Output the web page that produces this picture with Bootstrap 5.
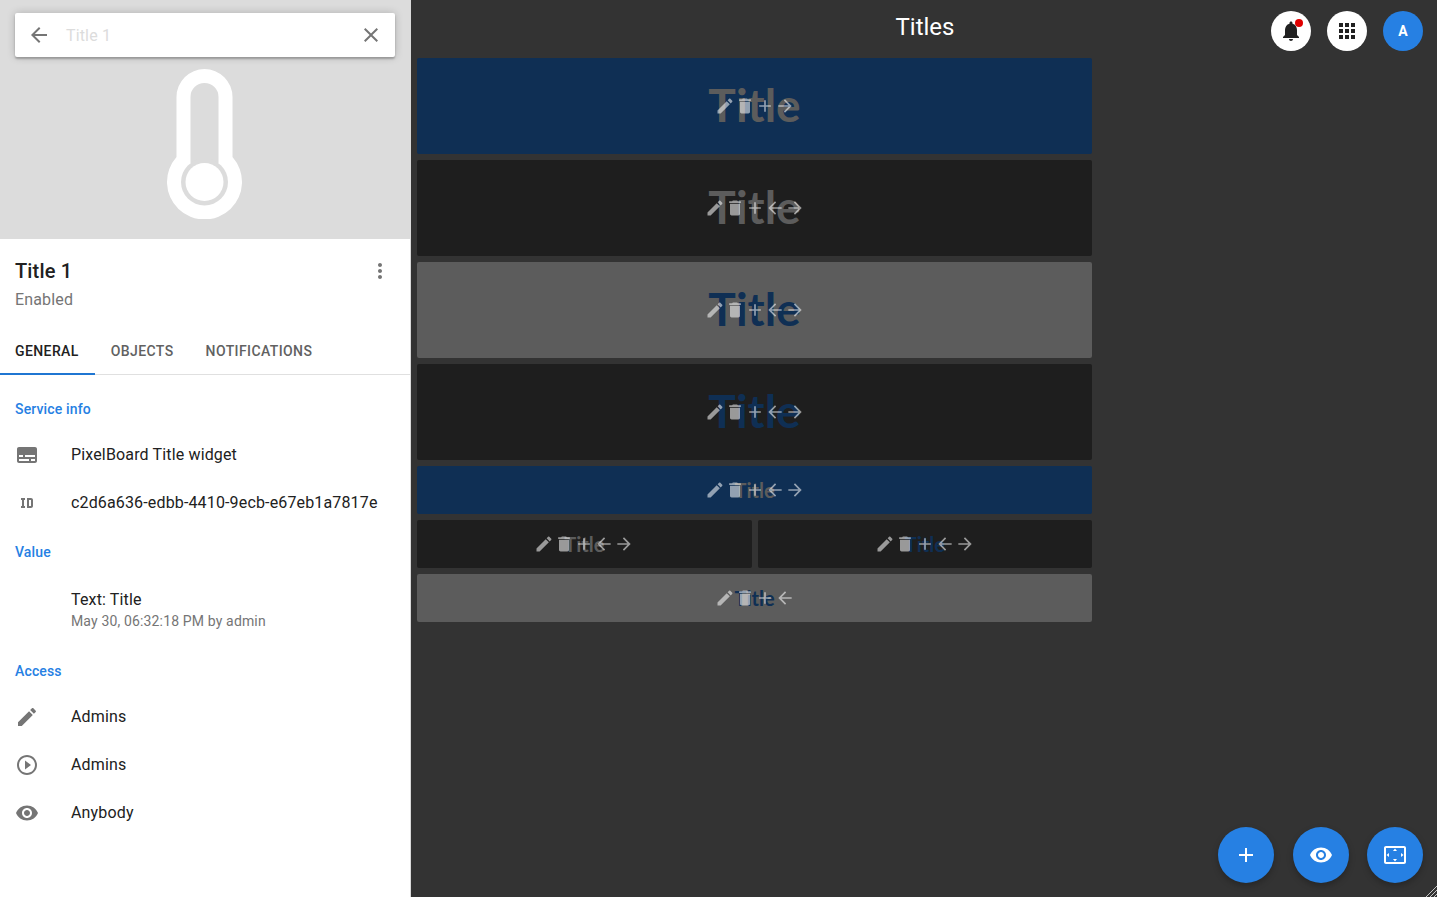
<!DOCTYPE html>
<html lang="en">
<head>
<meta charset="utf-8">
<title>Titles</title>
<link href="https://cdn.jsdelivr.net/npm/bootstrap@5.3.0/dist/css/bootstrap.min.css" rel="stylesheet">
<style>
html,body{height:100%;overflow:hidden}
body{font-family:Roboto,"Liberation Sans",sans-serif;background:#333;font-size:16px;color:#212121}
.shell{height:897px}
.side{width:411px;flex:0 0 411px;background:#fff;border-right:1px solid #d9d9d9;overflow:hidden;letter-spacing:.15px}
.hero{height:239px;background:#dcdcdc;padding:13px 15px 0}
.searchbar{height:44px;border-radius:2px;background:#fff;box-shadow:0 2px 2px rgba(0,0,0,.24),0 0 8px rgba(0,0,0,.2);padding:0 12px}
.searchbar .ph{margin-left:15px;color:#dcdcdc;font-size:16px;padding-top:2px}
.ico{fill:#757575;display:block;flex:none}
.thermo{display:block;margin:12px 0 0 152px}
.headline{padding:20px 18px 0 15px;height:89px}
.headline .nm{font-size:20px;line-height:24px;font-weight:500;color:#212121}
.headline .st{font-size:16px;line-height:24px;color:#757575;margin-top:5px}
.tabsrow{height:47px;border-bottom:1px solid #e0e0e0}
.tabitem{font-size:14px;font-weight:500;letter-spacing:.4px;color:#616161;padding:0 16px;line-height:46px;height:47px;text-transform:uppercase}
.tabitem:first-child{padding-left:15px;color:#212121;box-shadow:inset 0 -2px 0 #1f76d2}
.sect{font-size:14px;line-height:20px;font-weight:500;color:#2680e3;padding-left:15px;margin:16px 0 11px}
.sect.first{margin-top:24px}
.inforow{height:48px;padding:2px 0 0 15px}
.inforow.tall{height:72px;padding-top:14px}
.slot{width:56px;flex:none}
.inforow .main{font-size:16px;line-height:24px;color:#212121}
.inforow.tall .main{line-height:26px}
.inforow .sub{font-size:14px;line-height:20px;color:#757575;margin-top:-2px}
.stage{position:relative;min-width:0}
.topbar{height:58px;display:grid;grid-template-columns:1fr auto 1fr;align-items:center;padding:4px 14px 0 16px}
.topbar .hd{color:#fff;font-size:24px;line-height:28px;margin-top:-9px}
.roundbtn{width:40px;height:40px;padding:0;border:0;background:#fff;border-radius:50%}
.roundbtn svg{fill:#212121}
.avatar{background:#2680e3;color:#fff;font-size:14px;font-weight:700}
.tilegrid{width:675px;margin-left:6px;display:grid;grid-template-columns:1fr 1fr;gap:6px}
.tile{position:relative;grid-column:span 2;height:96px;border-radius:2px;overflow:hidden}
.tile.low{height:48px}
.tile.half{grid-column:span 1}
.blue{background:#0f2f54}
.dark{background:#1e1e1e}
.grey{background:#5c5c5c}
.word{font-family:Lato,"Liberation Sans",sans-serif;font-size:46px;font-weight:700;line-height:1;padding-bottom:2px;font-kerning:none;font-variant-ligatures:none}
.low .word{font-size:20px;padding-bottom:0}
.wgrey{color:#5c5c5c}
.wblue{color:#0f2f54}
.acts{position:absolute;inset:0}
.acts svg{width:20px;height:20px;fill:rgba(255,255,255,.55);display:block}
.fabs{position:absolute;right:14px;bottom:14px}
.fab{width:56px;height:56px;padding:0;border:0;border-radius:50%;background:#2680e3;box-shadow:0 3px 6px rgba(0,0,0,.25)}
.fab svg{fill:#fff}
.grip{position:absolute;right:0;bottom:0}
</style>
</head>
<body>
<svg width="0" height="0" class="position-absolute">
<defs>
<symbol id="i-edit" viewBox="0 0 24 24"><path d="M3 17.25V21h3.75L17.81 9.94l-3.75-3.75L3 17.25zM20.71 7.04c.39-.39.39-1.02 0-1.41l-2.34-2.34c-.39-.39-1.02-.39-1.41 0l-1.83 1.83 3.75 3.75 1.83-1.83z"/></symbol>
<symbol id="i-del" viewBox="0 0 24 24"><path d="M6 19c0 1.1.9 2 2 2h8c1.1 0 2-.9 2-2V7H6v12zM19 4h-3.5l-1-1h-5l-1 1H5v2h14V4z"/></symbol>
<symbol id="i-add" viewBox="0 0 24 24"><path d="M19 13h-6v6h-2v-6H5v-2h6V5h2v6h6v2z"/></symbol>
<symbol id="i-back" viewBox="0 0 24 24"><path d="M20 11H7.83l5.59-5.59L12 4l-8 8 8 8 1.41-1.41L7.83 13H20v-2z"/></symbol>
<symbol id="i-fwd" viewBox="0 0 24 24"><path d="M12 4l-1.41 1.41L16.17 11H4v2h12.17l-5.58 5.59L12 20l8-8z"/></symbol>
<symbol id="i-eye" viewBox="0 0 24 24"><path d="M12 4.5C7 4.5 2.73 7.61 1 12c1.73 4.39 6 7.5 11 7.5s9.27-3.11 11-7.5c-1.73-4.39-6-7.5-11-7.5zM12 17c-2.76 0-5-2.24-5-5s2.24-5 5-5 5 2.24 5 5-2.24 5-5 5zm0-8c-1.66 0-3 1.34-3 3s1.34 3 3 3 3-1.34 3-3-1.34-3-3-3z"/></symbol>
</defs>
</svg>
<div class="shell d-flex">
  <aside class="side">
    <div class="hero">
      <div class="searchbar d-flex align-items-center">
        <svg class="ico" width="24" height="24" viewBox="0 0 24 24"><use href="#i-back"/></svg>
        <span class="ph flex-grow-1">Title 1</span>
        <svg class="ico" width="24" height="24" viewBox="0 0 24 24"><path d="M19 6.41L17.59 5 12 10.59 6.41 5 5 6.41 10.59 12 5 17.59 6.41 19 12 13.41 17.59 19 19 17.59 13.41 12z"/></svg>
      </div>
      <svg class="thermo" width="75" height="150" viewBox="0 0 75 150">
        <path fill="#fff" d="M9.500 28A28 28 0 0 1 65.500 28V88A37.500 37.500 0 1 1 9.500 88Z" />
        <path fill="#dcdcdc" d="M23.500 28A14 14 0 0 1 51.500 28V94L23.500 94Z"/>
        <circle cx="37.500" cy="113" r="23.500" fill="#dcdcdc"/>
        <circle cx="37.500" cy="113" r="19" fill="#fff"/>
      </svg>
    </div>
    <div class="headline d-flex justify-content-between">
      <div><div class="nm">Title 1</div><div class="st">Enabled</div></div>
      <svg class="ico" width="24" height="24" viewBox="0 0 24 24"><path d="M12 8c1.100 0 2-.9 2-2s-.9-2-2-2-2 .9-2 2 .9 2 2 2zm0 2c-1.100 0-2 .9-2 2s.9 2 2 2 2-.9 2-2-.9-2-2-2zm0 6c-1.100 0-2 .9-2 2s.9 2 2 2 2-.9 2-2-.9-2-2-2z"/></svg>
    </div>
    <div class="tabsrow d-flex">
      <div class="tabitem">General</div>
      <div class="tabitem">Objects</div>
      <div class="tabitem">Notifications</div>
    </div>
    <div class="sect first">Service info</div>
    <div class="inforow d-flex align-items-center">
      <div class="slot"><svg class="ico" width="24" height="24" viewBox="0 0 24 24"><path d="M20 4H4c-1.100 0-2 .9-2 2v12c0 1.100.9 2 2 2h16c1.100 0 2-.9 2-2V6c0-1.100-.9-2-2-2zM4 12h4v2H4v-2zm10 6H4v-2h10v2zm6 0h-4v-2h4v2zm0-4H10v-2h10v2z"/></svg></div>
      <div class="main">PixelBoard Title widget</div>
    </div>
    <div class="inforow d-flex align-items-center">
      <div class="slot"><svg class="ico" width="24" height="24" viewBox="0 0 24 24"><path d="M10 7V9H9V15H10V17H6V15H7V9H6V7H10M16 7C17.110 7 18 7.900 18 9V15C18 16.110 17.110 17 16 17H12V7M16 9H14V15H16V9Z"/></svg></div>
      <div class="main">c2d6a636-edbb-4410-9ecb-e67eb1a7817e</div>
    </div>
    <div class="sect">Value</div>
    <div class="inforow tall d-flex align-items-start">
      <div class="slot"></div>
      <div><div class="main">Text: Title</div><div class="sub">May 30, 06:32:18 PM by admin</div></div>
    </div>
    <div class="sect">Access</div>
    <div class="inforow d-flex align-items-center">
      <div class="slot"><svg class="ico" width="24" height="24"><use href="#i-edit"/></svg></div><div class="main">Admins</div>
    </div>
    <div class="inforow d-flex align-items-center">
      <div class="slot"><svg class="ico" width="24" height="24" viewBox="0 0 24 24"><path d="M10 16.500l6-4.500-6-4.500v9zM12 2C6.480 2 2 6.480 2 12s4.480 10 10 10 10-4.480 10-10S17.520 2 12 2zm0 18c-4.410 0-8-3.590-8-8s3.590-8 8-8 8 3.590 8 8-3.590 8-8 8z"/></svg></div><div class="main">Admins</div>
    </div>
    <div class="inforow d-flex align-items-center">
      <div class="slot"><svg class="ico" width="24" height="24"><use href="#i-eye"/></svg></div><div class="main">Anybody</div>
    </div>
  </aside>
  <main class="stage flex-grow-1">
    <div class="topbar">
      <span></span>
      <div class="hd">Titles</div>
      <div class="d-flex justify-content-end" style="gap:16px">
        <button class="btn roundbtn d-flex align-items-center justify-content-center position-relative">
          <svg width="24" height="24" viewBox="0 0 24 24"><path d="M12 22c1.100 0 2-.9 2-2h-4c0 1.100.89 2 2 2zm6-6v-5c0-3.070-1.640-5.640-4.500-6.320V4c0-.83-.67-1.500-1.500-1.500s-1.500.67-1.500 1.500v.68C7.630 5.360 6 7.920 6 11v5l-2 2v1h16v-1l-2-2z"/></svg>
          <span class="position-absolute rounded-circle" style="width:8px;height:8px;background:#e00000;top:8px;left:24px"></span>
        </button>
        <button class="btn roundbtn d-flex align-items-center justify-content-center">
          <svg width="24" height="24" viewBox="0 0 24 24"><path d="M4 8h4V4H4v4zm6 12h4v-4h-4v4zm-6 0h4v-4H4v4zm0-6h4v-4H4v4zm6 0h4v-4h-4v4zm6-10v4h4V4h-4zm-6 4h4V4h-4v4zm6 6h4v-4h-4v4zm0 6h4v-4h-4v4z"/></svg>
        </button>
        <button class="btn roundbtn avatar d-flex align-items-center justify-content-center">A</button>
      </div>
    </div>
    <div class="tilegrid">
      <div class="tile blue d-flex align-items-center justify-content-center">
        <span class="word wgrey">Title</span>
        <div class="acts d-flex align-items-center justify-content-center">
          <svg><use href="#i-edit"/></svg><svg><use href="#i-del"/></svg><svg><use href="#i-add"/></svg><svg><use href="#i-fwd"/></svg>
        </div>
      </div>
      <div class="tile dark d-flex align-items-center justify-content-center">
        <span class="word wgrey">Title</span>
        <div class="acts d-flex align-items-center justify-content-center">
          <svg><use href="#i-edit"/></svg><svg><use href="#i-del"/></svg><svg><use href="#i-add"/></svg><svg><use href="#i-back"/></svg><svg><use href="#i-fwd"/></svg>
        </div>
      </div>
      <div class="tile grey d-flex align-items-center justify-content-center">
        <span class="word wblue">Title</span>
        <div class="acts d-flex align-items-center justify-content-center">
          <svg><use href="#i-edit"/></svg><svg><use href="#i-del"/></svg><svg><use href="#i-add"/></svg><svg><use href="#i-back"/></svg><svg><use href="#i-fwd"/></svg>
        </div>
      </div>
      <div class="tile dark d-flex align-items-center justify-content-center">
        <span class="word wblue">Title</span>
        <div class="acts d-flex align-items-center justify-content-center">
          <svg><use href="#i-edit"/></svg><svg><use href="#i-del"/></svg><svg><use href="#i-add"/></svg><svg><use href="#i-back"/></svg><svg><use href="#i-fwd"/></svg>
        </div>
      </div>
      <div class="tile low blue d-flex align-items-center justify-content-center">
        <span class="word wgrey">Title</span>
        <div class="acts d-flex align-items-center justify-content-center">
          <svg><use href="#i-edit"/></svg><svg><use href="#i-del"/></svg><svg><use href="#i-add"/></svg><svg><use href="#i-back"/></svg><svg><use href="#i-fwd"/></svg>
        </div>
      </div>
      <div class="tile low half dark d-flex align-items-center justify-content-center">
        <span class="word wgrey">Title</span>
        <div class="acts d-flex align-items-center justify-content-center">
          <svg><use href="#i-edit"/></svg><svg><use href="#i-del"/></svg><svg><use href="#i-add"/></svg><svg><use href="#i-back"/></svg><svg><use href="#i-fwd"/></svg>
        </div>
      </div>
      <div class="tile low half dark d-flex align-items-center justify-content-center">
        <span class="word wblue">Title</span>
        <div class="acts d-flex align-items-center justify-content-center">
          <svg><use href="#i-edit"/></svg><svg><use href="#i-del"/></svg><svg><use href="#i-add"/></svg><svg><use href="#i-back"/></svg><svg><use href="#i-fwd"/></svg>
        </div>
      </div>
      <div class="tile low grey d-flex align-items-center justify-content-center">
        <span class="word wblue">Title</span>
        <div class="acts d-flex align-items-center justify-content-center">
          <svg><use href="#i-edit"/></svg><svg><use href="#i-del"/></svg><svg><use href="#i-add"/></svg><svg><use href="#i-back"/></svg>
        </div>
      </div>
    </div>
    <div class="fabs d-flex" style="gap:18.500px">
      <button class="btn fab d-flex align-items-center justify-content-center"><svg width="24" height="24"><use href="#i-add"/></svg></button>
      <button class="btn fab d-flex align-items-center justify-content-center"><svg width="24" height="24"><use href="#i-eye"/></svg></button>
      <button class="btn fab d-flex align-items-center justify-content-center"><svg width="24" height="24" viewBox="0 0 24 24"><path d="M12.010 5.500L10 8h4l-1.990-2.500zM18 10v4l2.500-1.990L18 10zM6 10l-2.500 2.010L6 14v-4zm8 6h-4l2.010 2.500L14 16zm7-13H3c-1.100 0-2 .9-2 2v14c0 1.100.9 2 2 2h18c1.100 0 2-.9 2-2V5c0-1.100-.9-2-2-2zm0 16.010H3V4.990h18v14.020z"/></svg></button>
    </div>
    <svg class="grip" width="12" height="12" viewBox="0 0 12 12"><path d="M12 1L1 12M12 5L5 12M12 9L9 12" stroke="#c4c4c4" stroke-width="1" fill="none"/></svg>
  </main>
</div>
<script src="https://cdn.jsdelivr.net/npm/bootstrap@5.3.0/dist/js/bootstrap.bundle.min.js"></script>
</body>
</html>
